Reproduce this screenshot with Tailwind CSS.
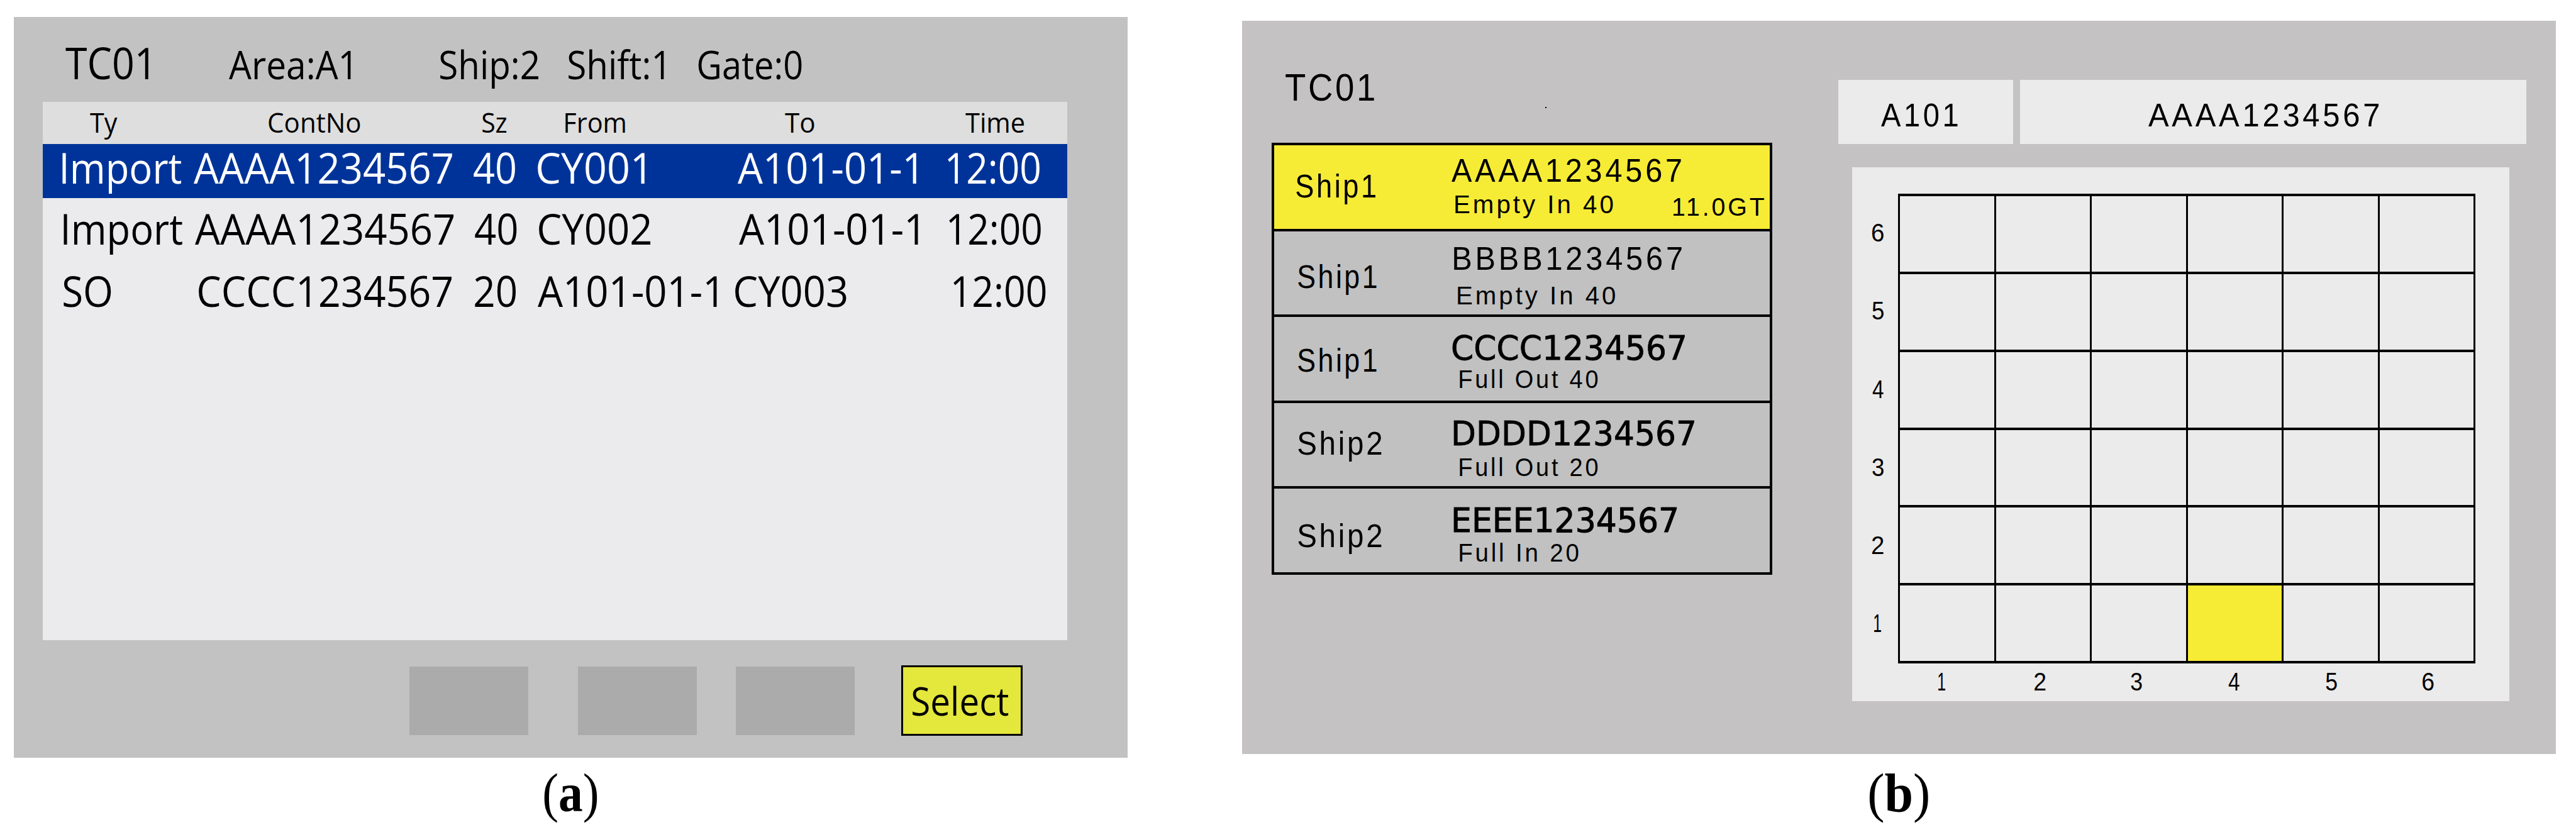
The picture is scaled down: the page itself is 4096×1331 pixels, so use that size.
<!DOCTYPE html>
<html lang="en">
  <head>
    <meta charset="UTF-8" />
    <meta name="viewport" content="width=device-width, initial-scale=1.0" />
    <script src="https://cdn.jsdelivr.net/npm/@tailwindcss/browser@4"></script>
    <title>Terminal screens</title>
  </head>

  <body class="w-[4096px] h-[1331px] overflow-hidden bg-white text-black leading-none whitespace-nowrap">
    <main class="flex items-start pl-[22px]">
      <!-- (a) job list -->
      <figure class="w-[1771px] pt-[27px] font-['Open_Sans','Noto_Sans',sans-serif]">
        <div class="h-[1178px] bg-[#c2c2c2]">
          <header
            class="grid grid-cols-[260px_336px_204px_206px_165px] items-baseline h-[135px] pt-[36.7px] pl-[82px] text-[62.5px] leading-none"
          >
            <span class="text-[68.8px]" data-w="132.6">TC01</span>
            <span data-w="193.6">Area:A1</span>
            <span data-w="156.5">Ship:2</span>
            <span data-w="151.3">Shift:1</span>
            <span data-w="164.8">Gate:0</span>
          </header>
          <section class="ml-[46px] w-[1629px] h-[856px] bg-[#ebebed] text-[67.8px] leading-none">
            <div
              class="grid grid-cols-[284px_340px_132px_349px_287px_94px] h-[67px] pt-[8.7px] pl-[75px] bg-[#dedede] text-[44.5px] leading-none"
            >
              <span data-w="44">Ty</span>
              <span data-w="146">ContNo</span>
              <span data-w="39">Sz</span>
              <span data-w="95">From</span>
              <span data-w="47">To</span>
              <span data-w="93.3">Time</span>
            </div>
            <div
              class="grid grid-cols-[209px_445px_102px_318px_334px_147px] h-[86px] pt-[3.3px] pl-[31px] bg-[#003399] text-white"
            >
              <span data-w="189.4">Import</span>
              <span data-w="411.3">AAAA1234567</span>
              <span data-w="66.5">40</span>
              <span data-w="169.8">CY001</span>
              <span data-w="284">A101-01-1</span>
              <span data-w="146.4">12:00</span>
            </div>
            <div class="grid grid-cols-[209px_445px_102px_318px_334px_147px] h-[99px] pt-[14.2px] pl-[33px]">
              <span data-w="189">Import</span>
              <span data-w="411.8">AAAA1234567</span>
              <span data-w="67">40</span>
              <span data-w="178">CY002</span>
              <span data-w="284.7">A101-01-1</span>
              <span data-w="146.3">12:00</span>
            </div>
            <div class="grid grid-cols-[215px_439px_100px_314px_347px_147px] h-[99px] pt-[14.1px] pl-[33px]">
              <span data-w="75.7">SO</span>
              <span data-w="402.5">CCCC1234567</span>
              <span data-w="65.5">20</span>
              <span data-w="284.7">A101-01-1</span>
              <span data-w="176.6">CY003</span>
              <span data-w="147">12:00</span>
            </div>
          </section>
          <div class="flex items-center pt-[40px] pl-[629px]">
            <div class="w-[189px] h-[109px] bg-[#ababab]"></div>
            <div class="w-[189px] h-[109px] ml-[79px] bg-[#ababab]"></div>
            <div class="w-[189px] h-[109px] ml-[62px] bg-[#ababab]"></div>
            <button
              class="w-[193px] h-[112px] ml-[74px] pt-[21px] pl-[15px] flex items-start border-3 border-black bg-[#e4e73c] text-[62px] leading-none"
            >
              <span class="text-left" data-w="152.5">Select</span>
            </button>
          </div>
        </div>
        <figcaption class="pt-[12px] pl-[843px] font-['Liberation_Serif',serif] text-[86px] leading-none">
          <span class="block" data-w="84.5">(<b>a</b>)</span>
        </figcaption>
      </figure>

      <!-- (b) yard position -->
      <figure class="ml-[182px] w-[2089px] pt-[33px] font-['Liberation_Sans',sans-serif]">
        <div class="flex h-[1166px] bg-[#c4c2c3]">
          <div class="w-[843px] pl-[47px]">
            <div class="flex h-[194px] pt-[72.5px] pl-[22px] text-[61.3px] leading-[65.3px] tracking-[4px]">
              <span data-w="141.5">TC01</span>
              <i class="block w-[2px] h-[2px] mt-[64px] ml-[271px] bg-black"></i>
            </div>
            <ul class="w-[796px] border-4 border-black divide-y-4 divide-black bg-[#c1c1c1] text-[51px] leading-[54.4px]">
              <li class="flex h-[137px] bg-[#f7ec35]">
                <div class="w-[282px] pt-[38.4px] pl-[35px]">
                  <span class="block tracking-[4px]" data-w="126">Ship1</span>
                </div>
                <div class="w-[353px] pt-[13.2px]">
                  <span class="block tracking-[5px]" data-w="364.8">AAAA1234567</span>
                  <span class="block mt-[4.6px] ml-[6px] text-[40.3px] leading-[43.2px] tracking-[4px]" data-w="250.5">Empty In 40</span>
                </div>
                <div class="pt-[76px] text-[40.3px] leading-[43.2px] tracking-[4px]">
                  <span class="block" data-w="144.3">11.0GT</span>
                </div>
              </li>
              <li class="flex h-[136px]">
                <div class="w-[286px] pt-[44.6px] pl-[38px]">
                  <span class="block tracking-[4px]" data-w="124.5">Ship1</span>
                </div>
                <div class="pt-[15.5px]">
                  <span class="block tracking-[5px]" data-w="361.8">BBBB1234567</span>
                  <span class="block mt-[10.3px] ml-[6px] text-[40.3px] leading-[43.2px] tracking-[4px]" data-w="250">Empty In 40</span>
                </div>
              </li>
              <li class="flex h-[137px]">
                <div class="w-[283.4px] pt-[41.5px] pl-[38px]">
                  <span class="block tracking-[4px]" data-w="124.5">Ship1</span>
                </div>
                <div class="pt-[21.6px]">
                  <span
                    class="block font-['DejaVu_Sans',sans-serif] text-[53px] leading-none [-webkit-text-stroke:0.8px_black]"
                    data-w="370.4"
                    >CCCC1234567</span
                  >
                  <span class="block mt-[2.4px] ml-[12px] text-[40.3px] leading-[43.2px] tracking-[4px]" data-w="219.3">Full Out 40</span>
                </div>
              </li>
              <li class="flex h-[136px]">
                <div class="w-[286px] pt-[37.2px] pl-[38px]">
                  <span class="block tracking-[4px]" data-w="132.4">Ship2</span>
                </div>
                <div class="pt-[20.8px]">
                  <span
                    class="block font-['DejaVu_Sans',sans-serif] text-[53px] leading-none [-webkit-text-stroke:0.8px_black]"
                    data-w="382.3"
                    >DDDD1234567</span
                  >
                  <span class="block mt-[6.6px] ml-[9px] text-[40.3px] leading-[43.2px] tracking-[4px]" data-w="219.3">Full Out 20</span>
                </div>
              </li>
              <li class="flex h-[133px]">
                <div class="w-[286px] pt-[47.9px] pl-[38px]">
                  <span class="block tracking-[4px]" data-w="132.4">Ship2</span>
                </div>
                <div class="pt-[22.5px]">
                  <span
                    class="block font-['DejaVu_Sans',sans-serif] text-[53px] leading-none [-webkit-text-stroke:1px_black]"
                    data-w="354.5"
                    >EEEE1234567</span
                  >
                  <span class="block mt-[4.3px] ml-[9px] text-[40.3px] leading-[43.2px] tracking-[4px]" data-w="188.6">Full In 20</span>
                </div>
              </li>
            </ul>
          </div>

          <div class="pt-[94px] pl-[105px]">
            <div class="flex gap-[11px] h-[102px] text-[52px] leading-[55.7px]">
              <div class="w-[278px] pt-[28px] pl-[68px] bg-[#ebebeb]">
                <span class="block tracking-[5px]" data-w="122">A101</span>
              </div>
              <div class="w-[805px] pt-[28px] pl-[204px] bg-[#ebebeb]">
                <span class="block tracking-[5px]" data-w="366.6">AAAA1234567</span>
              </div>
            </div>
            <!-- bay grid: 6 tiers x 6 rows -->
            <div class="mt-[37px] ml-[22px] w-[1045px] h-[849px] pt-[42px] bg-[#ebebeb] text-[40.7px] leading-[43.1px]">
              <div class="flex">
                <div class="w-[73px] pt-[40px] pl-[32px] flex flex-col gap-[81.2px]">
                  <span data-w="18">6</span>
                  <span data-w="18">5</span>
                  <span data-w="18">4</span>
                  <span data-w="18">3</span>
                  <span data-w="18">2</span>
                  <span class="ml-[3px]" data-w="11">1</span>
                </div>
                <div id="bay" class="grid grid-cols-6 grid-rows-6 gap-x-[3px] gap-y-[4px] w-[918px] h-[747px] px-[3px] py-[4px] bg-black"></div>
              </div>
              <div class="grid grid-cols-[153px_153.5px_155px_154.5px_154.5px_18px] pt-[7px] pl-[136.5px]">
                <span data-w="11">1</span>
                <span data-w="17.5">2</span>
                <span data-w="17.5">3</span>
                <span data-w="18">4</span>
                <span data-w="17.5">5</span>
                <span data-w="17.5">6</span>
              </div>
            </div>
          </div>
        </div>
        <figcaption class="pt-[18px] pl-[997px] font-['Liberation_Serif',serif] text-[86px] leading-none">
          <span class="block" data-w="94">(<b>b</b>)</span>
        </figcaption>
      </figure>
    </main>

    <script>
      const SELECTED = 33;
      const bay = document.querySelector("#bay");
      for (let i = 0; i < 36; i++) {
        bay.innerHTML += `<div class="${
          i === SELECTED ? "bg-[#f7ec35]" : "bg-[#ebebeb]"
        }"></div>`;
      }

      const ctx = document.createElement("canvas").getContext("2d");
      const fitLabels = () => {
        document.querySelectorAll("[data-w]").forEach((el) => {
          const style = getComputedStyle(el);
          ctx.font = `${style.fontWeight} ${style.fontSize} ${style.fontFamily}`;
          ctx.letterSpacing =
            style.letterSpacing === "normal" ? "0px" : style.letterSpacing;
          const m = ctx.measureText(el.textContent);
          // the bold letter in a caption is a bit wider than measured
          const extra = el.querySelector("b") ? 5 : 0;
          const left = -m.actualBoundingBoxLeft;
          const scale = el.dataset.w / (m.actualBoundingBoxRight + extra - left);
          el.style.width = `${el.dataset.w}px`;
          el.style.transformOrigin = "0 0";
          el.style.transform = `translate(${-left * scale}px, 1px) scaleX(${scale})`;
        });
      };
      fitLabels();
      window.addEventListener("load", fitLabels);
      // the stylesheet may land after the first pass
      new ResizeObserver(fitLabels).observe(document.querySelector("main"));
    </script>
  </body>
</html>
